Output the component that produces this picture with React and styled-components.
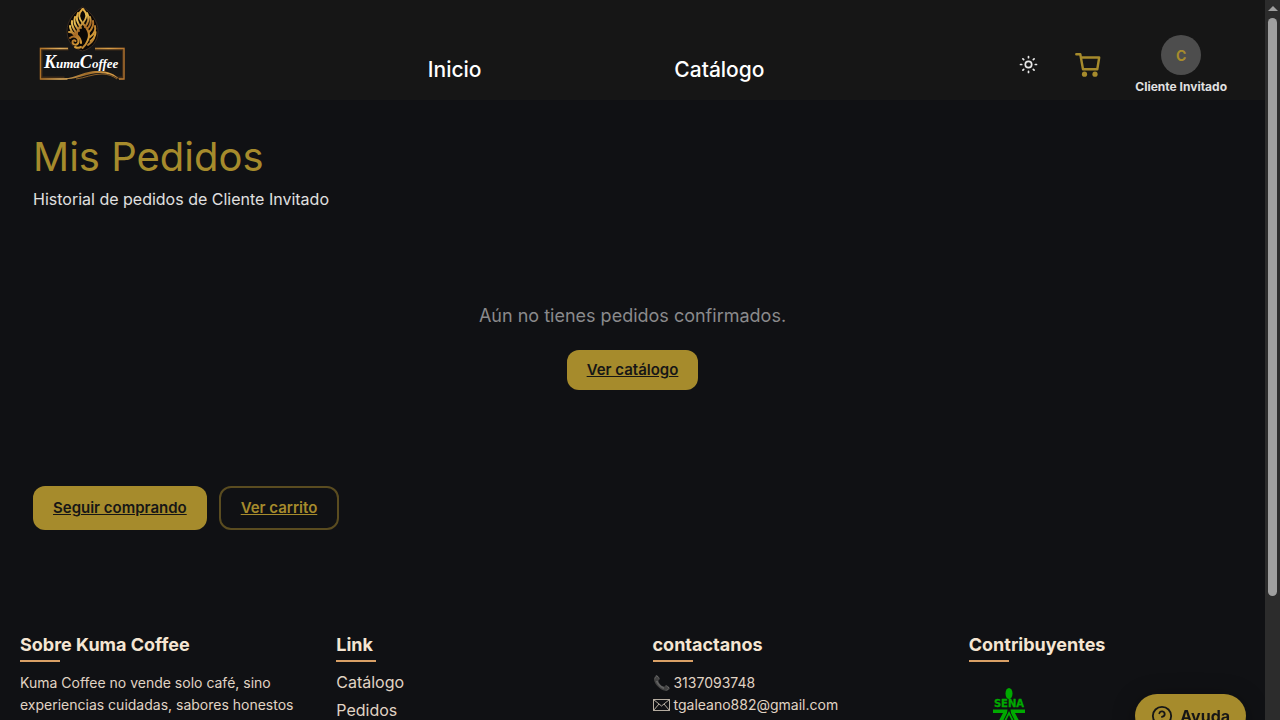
import styled, { createGlobalStyle } from 'styled-components'

const GlobalStyle = createGlobalStyle`
  :root {
    color-scheme: dark;
  }
  * {
    box-sizing: border-box;
  }
  body {
    margin: 0;
    background: #101114;
    color: #e0e0e0;
    font-family: Inter, Roboto, sans-serif;
    font-size: 16px;
    line-height: 24px;
  }
`

const Page = styled.div`
  padding-right: 15px;
`

const Scrollbar = styled.div`
  position: fixed;
  top: 0;
  right: 0;
  bottom: 0;
  display: flex;
  flex-direction: column;
  align-items: center;
  gap: 7px;
  width: 15px;
  padding-top: 6px;
  background: #2c2c2c;
  &:before {
    content: '';
    border: 5px solid transparent;
    border-top: 0;
    border-bottom-color: #9f9f9f;
  }
`

const Thumb = styled.div`
  width: 9px;
  height: 81%;
  border-radius: 5px;
  background: #9f9f9f;
`

const Header = styled.header`
  display: flex;
  align-items: center;
  min-height: 100px;
  padding: 0 38px;
  background: #161616;
`

const Brand = styled.a`
  display: block;
  width: 88px;
  height: 88px;
`

const Nav = styled.nav`
  display: flex;
  flex: 1;
  justify-content: space-evenly;
  padding: 40px 62px 0 109px;
  a {
    color: #fff;
    font-size: 21px;
    font-weight: 500;
    text-decoration: none;
  }
`

const Actions = styled.div`
  display: flex;
  align-items: center;
  padding-top: 29px;
`

const IconButton = styled.button`
  display: flex;
  padding: 0;
  border: 0;
  background: none;
  cursor: pointer;
`

const CartLink = styled.a`
  display: flex;
  margin: 0 34px 0 37px;
  color: #a68b2c;
`

const Profile = styled.a`
  display: flex;
  flex-direction: column;
  align-items: center;
  gap: 4px;
  color: #e0e0e0;
  font-size: 12px;
  font-weight: 700;
  line-height: 15px;
  text-decoration: none;
`

const Avatar = styled.span`
  display: flex;
  align-items: center;
  justify-content: center;
  width: 40px;
  height: 40px;
  border-radius: 50%;
  background: #4d4d4d;
  color: #a68b2c;
  font-size: 14px;
`

const Main = styled.main`
  padding: 32px 33px 60px;
`

const Title = styled.h1`
  margin: 0 0 5px;
  color: #a68b2c;
  font-size: 40px;
  font-weight: 400;
  line-height: 50px;
`

const Subtitle = styled.p`
  margin: 0;
`

const Empty = styled.section`
  display: flex;
  flex-direction: column;
  align-items: center;
  gap: 22px;
  padding: 93px 0 96px;
  p {
    margin: 0;
    color: #8a8a8c;
    font-size: 18px;
  }
`

const ButtonLink = styled.a`
  display: inline-block;
  padding: 8px 20px;
  border-radius: 12px;
  background: #a68b2c;
  color: #161616;
  font-size: 15px;
  font-weight: 600;
`

const PageActions = styled.div`
  display: flex;
  gap: 12px;
  ${ButtonLink} {
    padding: 10px 20px;
  }
`

const OutlineLink = styled(ButtonLink)`
  && {
    padding: 8px 20px;
  }
  border: 2px solid #5a4c20;
  background: transparent;
  color: #a68b2c;
`

const Footer = styled.footer`
  display: grid;
  grid-template-columns: repeat(4, 1fr);
  padding: 40px 0 84px;
  color: #e0d4c4;
`

const Column = styled.section`
  padding: 0 20px;
  font-size: 14px;
  line-height: 22px;
  p {
    margin: 0;
  }
  a {
    display: block;
    color: inherit;
    text-decoration: none;
  }
`

const ColumnTitle = styled.h2`
  margin: 0 0 ${(props) => (props.$tight ? 6 : 10)}px;
  color: #f5e6d3;
  font-size: 18px;
  font-weight: 700;
  line-height: 30px;
  &:after {
    content: '';
    display: block;
    width: 40px;
    height: 2px;
    background: #d9a066;
  }
`

const LinkList = styled.nav`
  font-size: 16px;
  line-height: 28px;
`

const MailIcon = styled.svg`
  margin-right: 4px;
  vertical-align: -1px;
`

const SenaLink = styled.a`
  width: 80px;
  padding: 16px 24px 0;
`

const HelpButton = styled.button`
  position: fixed;
  right: 34px;
  bottom: -18px;
  display: flex;
  align-items: center;
  gap: 7px;
  height: 44px;
  padding: 0 16px;
  border: 0;
  border-radius: 22px;
  background: #a68b2c;
  box-shadow: 0 4px 24px rgba(0, 0, 0, 0.3);
  color: #161616;
  font-family: inherit;
  font-size: 16px;
  font-weight: 700;
`

const Logo = () => (
  <svg width="88" height="88" viewBox="0 0 88 88" aria-hidden="true">
    <defs>
      <linearGradient id="gold" gradientUnits="userSpaceOnUse" x1="32" y1="4" x2="58" y2="42">
        <stop offset="0" stopColor="#d9952f" />
        <stop offset="0.3" stopColor="#e8c055" />
        <stop offset="0.5" stopColor="#a86a26" />
        <stop offset="0.75" stopColor="#d9a03a" />
        <stop offset="1" stopColor="#7a4820" />
      </linearGradient>
      <linearGradient id="frame" gradientUnits="userSpaceOnUse" x1="0" y1="0" x2="88" y2="0">
        <stop offset="0" stopColor="#a8691f" />
        <stop offset="0.25" stopColor="#e0b060" />
        <stop offset="0.55" stopColor="#9b6928" />
        <stop offset="0.8" stopColor="#d9a04a" />
        <stop offset="1" stopColor="#b0702c" />
      </linearGradient>
    </defs>
    <path d="M1.500 41.500h29v3h-26v26h22v3h-25zM57 41.500h30v32h-6l-4-3h7v-26H57z" fill="#3d2a18" />
    <path d="M30 42.500H2.500v30.500h27M57 42.500h29v30.500H81" fill="none" stroke="url(#frame)" strokeWidth="1.300" />
    <path d="M20 73c18 0 24-8 40-8 10 0 17 3 21 8-6-4-12-6-19-6-14 0-20 6-33 6z" fill="url(#frame)" />
    <path d="M38 73c9-1 16-5 26-5 6 0 11 2 15 5" fill="none" stroke="#a8722e" strokeWidth="0.800" />
    <path d="M44.500 1C53 6 60 15 60 25c0 11-7 18-15.500 20C36 43 29 36 29 25 29 15 36 6 44.500 1z" fill="#0a0705" stroke="#3a2c22" strokeWidth="1" />
    <g fill="none" stroke="url(#gold)" strokeLinecap="round" strokeWidth="2">
      <path d="M44.500 3c-5 5-4 9 0 14s9 10 5 18c-1 3-3 5-5 7" />
      <path d="M45 3c5 5 4 9 0 14-5 5-7 9-6 14" />
      <path d="M40 7c-3 6 0 10 3 15" />
      <path d="M37 11c-2 6 1 9 4 14" />
      <path d="M34 15c-1 5 2 8 5 13" />
      <path d="M32 20c0 4 2 6 5 10" />
      <path d="M49 7c3 5 1 10-2 14" />
      <path d="M52 11c2 5 0 9-3 12" />
      <path d="M55 15c1 5-1 8-4 11" />
      <path d="M57 20c1 4-1 8-5 11" />
      <path d="M57.500 26c0 4-2 7-5 9" />
      <path d="M56 32c-1 3-3 5-6 7" />
      <path d="M31 26c6 0 12 5 12 11" />
      <path d="M32 32c4-3 9-1 8.500 4-1 4-6 3-6 0 0-2 2-2 3-1" />
      <path d="M37 41c2 1 4 1 6 0" />
    </g>
    <text x="6" y="62" fill="#fff" fontFamily="Liberation Serif, serif" fontSize="13" fontStyle="italic" fontWeight="700">
      <tspan fontSize="18">K</tspan>uma<tspan fontSize="18">C</tspan>offee
    </text>
  </svg>
)

const Sun = () => (
  <svg width="19" height="19" viewBox="0 0 19 19" fill="none" stroke="#e8e8e8" strokeWidth="1.700" strokeLinecap="round" aria-hidden="true">
    <circle cx="9.500" cy="9.500" r="3.200" />
    <path d="M9.500 1.500v1.200M9.500 16.300v1.200M1.500 9.500h1.200M16.300 9.500h1.200M3.900 3.900l.8.800M14.300 14.300l.8.800M3.900 15.100l.8-.8M14.300 4.700l.8-.8" />
  </svg>
)

const Cart = () => (
  <svg width="26" height="26" viewBox="0 0 26 26" fill="none" stroke="currentColor" strokeWidth="2.400" strokeLinejoin="round" strokeLinecap="round" aria-hidden="true">
    <path d="M1.300 2.200h4l2.700 15h14.300l1.900-11.700H6" />
    <circle cx="9.500" cy="22.200" r="2.600" fill="currentColor" stroke="none" />
    <circle cx="20" cy="22.200" r="2.600" fill="currentColor" stroke="none" />
  </svg>
)

const Mail = () => (
  <MailIcon width="17" height="12" viewBox="0 0 17 12" fill="none" stroke="currentColor" strokeWidth="0.800" aria-hidden="true">
    <path d="M.5.500h16v11H.5zM.5.500l8 6.500 8-6.500M.5 11.500l5.500-6.500M16.500 11.500L11 5" />
  </MailIcon>
)

const Sena = () => (
  <svg width="32" height="40" viewBox="0 0 32 40" fill="#0a0" role="img" aria-label="SENA">
    <ellipse cx="16" cy="5.500" rx="3.500" ry="5.500" />
    <text x="16" y="19.300" textAnchor="middle" stroke="#0a0" strokeWidth="0.300" fontFamily="DejaVu Sans, sans-serif" fontSize="10" fontWeight="700">
      SENA
    </text>
    <path d="M0 21.500h14.500L14 25 6.500 40H2l8-15H0zM32 21.500H17.500L18 25l7.500 15H30l-8-15h10z" />
    <path d="M16 23l5.500 11-5.500-3-5.500 3z" />
    <path d="M16 27l2.500 5h-5z" fill="#101114" />
  </svg>
)

const Help = () => (
  <svg width="22" height="22" viewBox="0 0 24 24" fill="none" stroke="currentColor" strokeWidth="2" strokeLinecap="round" strokeLinejoin="round" aria-hidden="true">
    <circle cx="12" cy="12" r="10" />
    <path d="M9.090 9a3 3 0 0 1 5.830 1c0 2-3 3-3 3M12 17h.01" />
  </svg>
)

function App() {
  return (
    <>
      <GlobalStyle />
      <Page>
        <Header>
          <Brand href="/" aria-label="Kuma Coffee">
            <Logo />
          </Brand>
          <Nav>
            <a href="/">Inicio</a>
            <a href="/catalogo">Catálogo</a>
          </Nav>
          <Actions>
            <IconButton type="button" aria-label="Cambiar tema">
              <Sun />
            </IconButton>
            <CartLink href="/carrito" aria-label="Carrito">
              <Cart />
            </CartLink>
            <Profile href="/perfil">
              <Avatar>C</Avatar>
              Cliente Invitado
            </Profile>
          </Actions>
        </Header>

        <Main>
          <Title>Mis Pedidos</Title>
          <Subtitle>Historial de pedidos de Cliente Invitado</Subtitle>
          <Empty>
            <p>Aún no tienes pedidos confirmados.</p>
            <ButtonLink href="/catalogo">Ver catálogo</ButtonLink>
          </Empty>
          <PageActions>
            <ButtonLink href="/catalogo">Seguir comprando</ButtonLink>
            <OutlineLink href="/carrito">Ver carrito</OutlineLink>
          </PageActions>
        </Main>

        <Footer>
          <Column>
            <ColumnTitle>Sobre Kuma Coffee</ColumnTitle>
            <p>Kuma Coffee no vende solo café, sino experiencias cuidadas, sabores honestos</p>
          </Column>
          <Column>
            <ColumnTitle $tight>Link</ColumnTitle>
            <LinkList>
              <a href="/catalogo">Catálogo</a>
              <a href="/pedidos">Pedidos</a>
            </LinkList>
          </Column>
          <Column>
            <ColumnTitle>contactanos</ColumnTitle>
            <a href="tel:3137093748">📞 3137093748</a>
            <a href="mailto:tgaleano882@gmail.com">
              <Mail />
              tgaleano882@gmail.com
            </a>
          </Column>
          <Column>
            <ColumnTitle>Contribuyentes</ColumnTitle>
            <SenaLink href="/sena">
              <Sena />
            </SenaLink>
          </Column>
        </Footer>
      </Page>

      <HelpButton type="button">
        <Help />
        Ayuda
      </HelpButton>
      <Scrollbar>
        <Thumb />
      </Scrollbar>
    </>
  )
}

export default App
